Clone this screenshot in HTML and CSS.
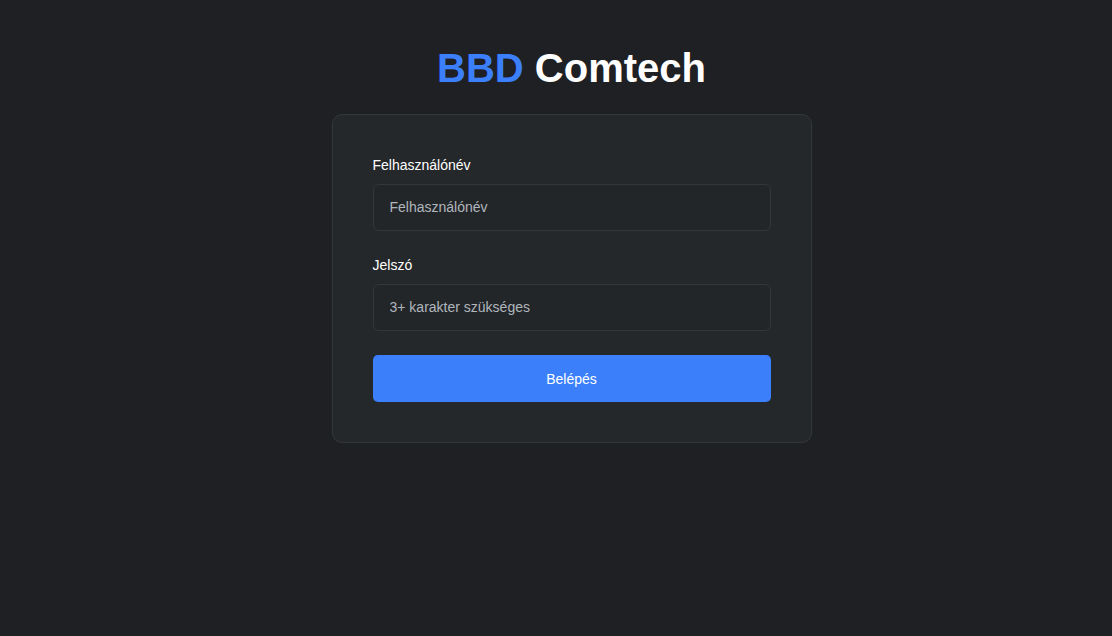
FILE: index.html
```html
<!DOCTYPE html>
<html lang="hu">
<head>
<meta charset="utf-8">
<title>BBD Comtech</title>
<link rel="stylesheet" href="styles.css">
</head>
<body>
<main class="page">
  <h1 class="brand"><span class="brand-accent">BBD</span> Comtech</h1>
  <form class="card">
    <div class="field">
      <label class="label" for="user">Felhasználónév</label>
      <input class="input" id="user" type="text" placeholder="Felhasználónév">
    </div>
    <div class="field">
      <label class="label" for="pass">Jelszó</label>
      <input class="input" id="pass" type="password" placeholder="3+ karakter szükséges">
    </div>
    <button class="button" type="button">Belépés</button>
  </form>
</main>
</body>
</html>
```

FILE: styles.css
```css
html, body {
  margin: 0;
  padding: 0;
  background: #1f2023;
  font-family: "Liberation Sans", Arial, sans-serif;
  color: #ffffff;
}

.page {
  display: flex;
  flex-direction: column;
  align-items: center;
  padding-top: 44px;
  padding-left: 31px;
  min-height: 592px;
}

.brand {
  margin: 0 0 22px;
  font-size: 40px;
  line-height: 48px;
  font-weight: 700;
  color: #ffffff;
}

.brand-accent {
  color: #3b7ffb;
}

.card {
  box-sizing: border-box;
  width: 480px;
  padding: 40px;
  background: #25282b;
  border: 1px solid #33363a;
  border-radius: 10px;
}

.field {
  margin-bottom: 24px;
}

.label {
  display: block;
  font-size: 14px;
  line-height: 21px;
  margin-bottom: 8px;
  color: #ffffff;
}

.input {
  box-sizing: border-box;
  display: block;
  width: 100%;
  height: 47px;
  padding: 0 16px 1px;
  font-family: inherit;
  font-size: 14px;
  color: #e9ecef;
  background: #232629;
  border: 1px solid #33363a;
  border-radius: 6px;
  outline: none;
}

.input::placeholder {
  color: #b0b6bd;
}

.button {
  display: block;
  width: 100%;
  height: 47px;
  padding: 0;
  font-family: inherit;
  font-size: 14px;
  color: #ffffff;
  background: #3b7ffb;
  border: none;
  border-radius: 5px;
  cursor: pointer;
}
```
